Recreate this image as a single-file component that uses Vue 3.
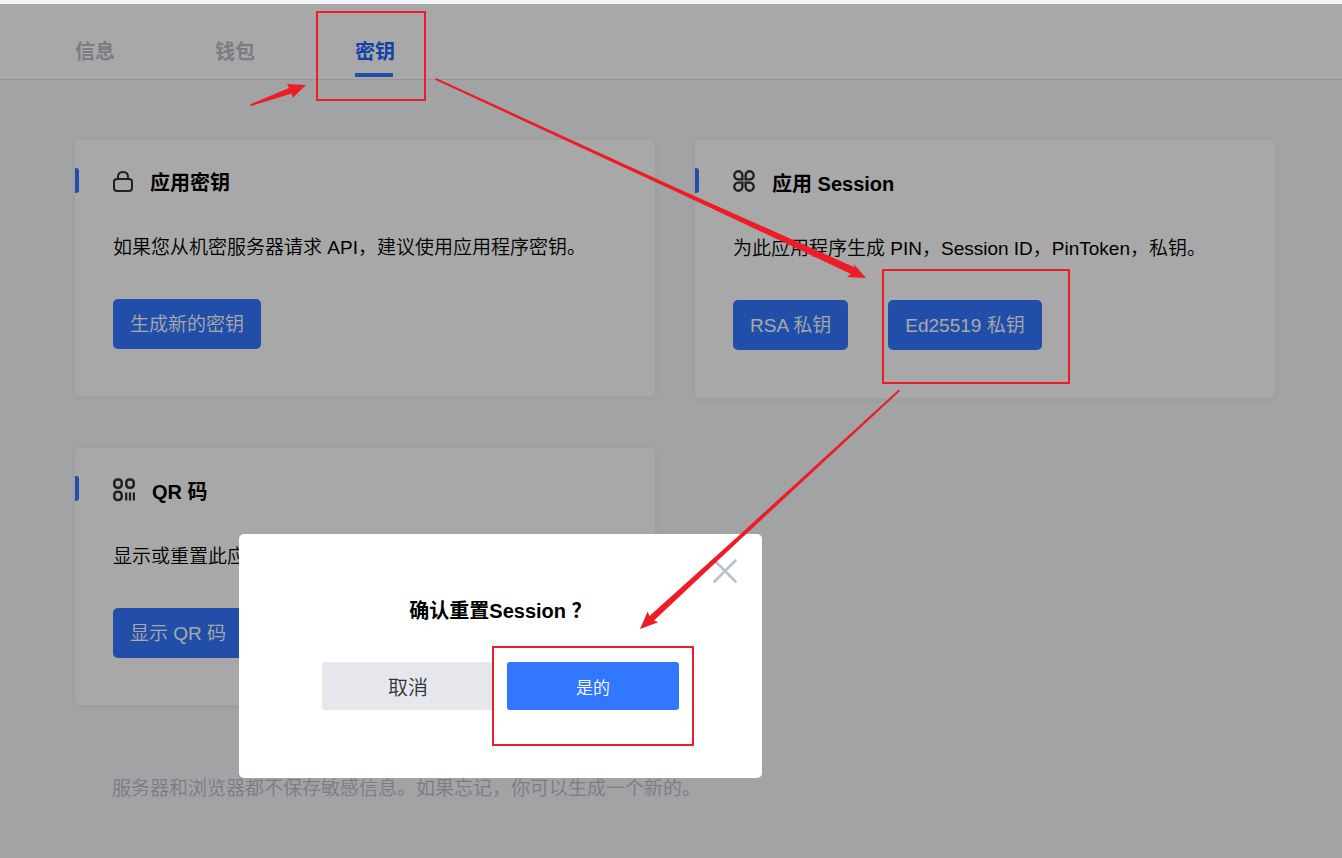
<script setup>
import { ref } from 'vue'

const tabs = [
  { id: 'info', label: '信息' },
  { id: 'wallet', label: '钱包' },
  { id: 'secret', label: '密钥' },
]
const active = ref('secret')
const open = ref(true)

const cards = [
  {
    id: 'lock',
    title: '应用密钥',
    text: '如果您从机密服务器请求 API，建议使用应用程序密钥。',
    actions: ['生成新的密钥'],
  },
  {
    id: 'session',
    title: '应用 Session',
    text: '为此应用程序生成 PIN，Session ID，PinToken，私钥。',
    actions: ['RSA 私钥', 'Ed25519 私钥'],
  },
  {
    id: 'qr',
    title: 'QR 码',
    text: '显示或重置此应用的 QR 码。',
    actions: ['显示 QR 码'],
  },
]
</script>

<template>
  <div class="page">
    <header class="top">
      <nav class="tabs">
        <a
          v-for="t in tabs"
          :key="t.id"
          href="#"
          class="tab"
          :class="{ 'tab--active': t.id === active }"
          @click.prevent="active = t.id"
        >{{ t.label }}</a>
      </nav>
    </header>

    <main class="main">
      <div class="cards">
        <section v-for="c in cards" :key="c.id" class="card" :class="'card--' + c.id">
          <div class="card__head">
            <svg v-if="c.id === 'lock'" class="icon" width="20" height="22" viewBox="0 0 20 22" fill="none" stroke="#333" stroke-width="2">
              <rect x="1" y="9" width="18" height="12" rx="3" />
              <path d="M5 9V7C5 3.900 7 2 10 2s5 1.900 5 5v2" />
            </svg>
            <svg v-else-if="c.id === 'session'" class="icon" width="22" height="22" viewBox="0 0 22 22" fill="none" stroke="#333" stroke-width="2.400">
              <path d="M9.400 9.400H5.200A4.050 4.050 0 1 1 9.400 5.200z" />
              <path d="M12.600 9.400h4.200A4.050 4.050 0 1 0 12.600 5.200z" />
              <path d="M9.400 12.600H5.200A4.050 4.050 0 1 0 9.400 16.800z" />
              <path d="M12.600 12.600h4.200A4.050 4.050 0 1 1 12.600 16.800z" />
            </svg>
            <svg v-else class="icon" width="22" height="24" viewBox="0 0 22 24" fill="none" stroke="#333" stroke-width="2.500">
              <rect x="1.300" y="1.400" width="7.400" height="8.400" rx="3" />
              <rect x="13.300" y="1.400" width="7.400" height="8.400" rx="3" />
              <rect x="1.300" y="13.700" width="7.400" height="8.400" rx="3" />
              <path d="M13.200 14.500v8M17 14.500v8M20.900 14.500v8" stroke-width="2.200" />
            </svg>
            <h2 class="card__title">{{ c.title }}</h2>
          </div>
          <p class="card__text">{{ c.text }}</p>
          <div class="card__actions">
            <button v-for="a in c.actions" :key="a" type="button" class="btn" @click="open = true">{{ a }}</button>
          </div>
        </section>
      </div>
      <p class="note">服务器和浏览器都不保存敏感信息。如果忘记，你可以生成一个新的。</p>
    </main>

    <div v-if="open" class="mask">
      <div class="modal" role="dialog" aria-modal="true" aria-labelledby="modal-title">
        <button type="button" class="modal__close" aria-label="关闭" @click="open = false">
          <svg width="24" height="24" viewBox="0 0 24 24" fill="none" stroke="#b9bfcb" stroke-width="2.600" stroke-linecap="round">
            <path d="M1.500 1.500l21 21M22.500 1.500l-21 21" />
          </svg>
        </button>
        <h3 id="modal-title" class="modal__title">确认重置Session ？</h3>
        <div class="modal__actions">
          <button type="button" class="choice choice--cancel" @click="open = false">取消</button>
          <button type="button" class="choice choice--ok" @click="open = false">是的</button>
        </div>
      </div>
    </div>

    <svg class="marks" width="1342" height="858" viewBox="0 0 1342 858" aria-hidden="true">
      <g fill="none" stroke="#ee1c24" stroke-width="2">
        <rect x="317" y="12" width="108" height="88" />
        <rect x="883" y="270" width="186" height="113" />
        <rect x="493" y="647" width="200" height="98" />
      </g>
      <g fill="#ee1c24">
        <path d="M250 104.500L289 88 287 84 306 85 292.500 98 292 93.500 251 106z" />
        <path d="M436 78L680 189.500 855 267.500 853.300 263.500 866 278 847 277 851 274 680 193.500 435 79.800z" />
        <path d="M898.800 389.500L740 534.500 649.500 616 647.700 611.500 640 629 658.200 622.300 654 620.500 740 539.800 900 391z" />
      </g>
    </svg>
  </div>
</template>

<style>
html,
body {
  margin: 0;
  background: #f6f7fa;
}
</style>

<style scoped>
.page {
  position: relative;
  min-height: 100vh;
  overflow: hidden;
  box-sizing: border-box;
  border-top: 4px solid #f4f5f5;
  background: #f6f7fa;
  color: #000;
  font-family: "Liberation Sans", "Noto Sans CJK SC", sans-serif;
  font-size: 19px;
  font-weight: 350;
}

button {
  padding: 0;
  border: 0;
  font: inherit;
  cursor: pointer;
}

.top {
  padding: 0 75px;
  border-bottom: 1px solid #e2e3ef;
  background: #fff;
}

.tabs {
  display: flex;
  gap: 100px;
}

.tab {
  box-sizing: border-box;
  height: 75px;
  padding-top: 33px;
  color: #b9bec9;
  font-size: 20px;
  font-weight: 700;
  line-height: 30px;
  text-decoration: none;
}

.tab--active {
  color: #1a62ff;
}

.tab--active::after {
  content: "";
  display: block;
  width: 38px;
  height: 4px;
  margin-top: 6px;
  background: #3177ff;
}

.main {
  padding: 60px 67px 0 75px;
}

.cards {
  display: grid;
  grid-template-columns: 1fr 1fr;
  align-items: start;
  gap: 50px 40px;
}

.card {
  position: relative;
  padding: 28px 38px 47px;
  border-radius: 5px;
  background: #fff;
  box-shadow: 0 1px 6px rgba(60, 70, 140, 0.08);
}

.card::before {
  content: "";
  position: absolute;
  left: 0;
  top: 28px;
  width: 4px;
  height: 25px;
  border-radius: 0 3px 3px 0;
  background: #3177ff;
}

.card__head {
  display: flex;
  align-items: flex-start;
  gap: 17px;
}

.icon {
  flex: none;
  margin-top: 2px;
}

.card__title {
  margin: 0;
  font-size: 20px;
  font-weight: 700;
  line-height: 30px;
}

.card--session {
  padding-bottom: 48px;
}

.card--session .card__title,
.card--qr .card__title {
  padding-top: 1px;
}

.card__text {
  margin: 35px 0 0;
  line-height: 30px;
}

.card__actions {
  display: flex;
  gap: 40px;
  margin-top: 36px;
}

.btn {
  height: 50px;
  padding: 0 17px 4px;
  border-radius: 5px;
  background: #3177ff;
  color: #fff;
}

.note {
  margin: 69px 37px 0;
  color: #b9bec9;
  line-height: 30px;
}

.mask {
  position: absolute;
  inset: 0;
  background: rgba(0, 0, 0, 0.34);
}

.modal {
  position: absolute;
  left: 239px;
  top: 530px;
  box-sizing: border-box;
  width: 523px;
  padding: 62px 0 68px;
  border-radius: 5px;
  background: #fff;
  text-align: center;
}

.modal__close {
  position: absolute;
  top: 25px;
  right: 25px;
  height: 24px;
  background: none;
}

.modal__close svg {
  display: block;
}

.modal__title {
  margin: 0;
  font-size: 20px;
  font-weight: 700;
  line-height: 30px;
}

.modal__actions {
  display: flex;
  justify-content: center;
  gap: 13px;
  margin-top: 36px;
}

.choice {
  width: 172px;
  height: 48px;
  border-radius: 3px;
}

.choice--cancel {
  background: #e5e7ec;
  color: #333;
  font-size: 20px;
}

.choice--ok {
  background: #3177ff;
  color: #fff;
  font-size: 17px;
}

.marks {
  position: absolute;
  left: 0;
  top: -4px;
  pointer-events: none;
}
</style>
